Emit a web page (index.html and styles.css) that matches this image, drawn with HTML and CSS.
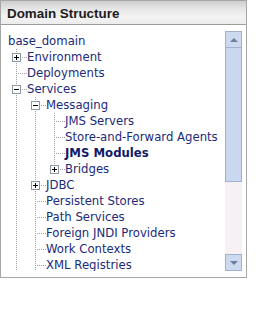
FILE: index.html
```html
<!DOCTYPE html>
<html>
<head>
<meta charset="utf-8">
<link rel="stylesheet" href="styles.css">
</head>
<body>
<div class="panel">
  <div class="header">Domain Structure</div>
  <div class="content">
    <div class="tree">
      <div class="row root"><span class="label">base_domain</span></div>
      <div class="row"><span class="c tee"><span class="box plus"></span></span><span class="label">Environment</span></div>
      <div class="row"><span class="c tee h"></span><span class="label">Deployments</span></div>
      <div class="row"><span class="c tee"><span class="box minus"></span></span><span class="label">Services</span></div>
      <div class="row"><span class="c v"></span><span class="c tee"><span class="box minus"></span></span><span class="label">Messaging</span></div>
      <div class="row"><span class="c v"></span><span class="c v"></span><span class="c tee h"></span><span class="label">JMS Servers</span></div>
      <div class="row"><span class="c v"></span><span class="c v"></span><span class="c tee h"></span><span class="label">Store-and-Forward Agents</span></div>
      <div class="row"><span class="c v"></span><span class="c v"></span><span class="c tee h"></span><span class="label bold">JMS Modules</span></div>
      <div class="row"><span class="c v"></span><span class="c v"></span><span class="c ell"><span class="box plus"></span></span><span class="label">Bridges</span></div>
      <div class="row"><span class="c v"></span><span class="c tee"><span class="box plus"></span></span><span class="label">JDBC</span></div>
      <div class="row"><span class="c v"></span><span class="c tee h"></span><span class="label">Persistent Stores</span></div>
      <div class="row"><span class="c v"></span><span class="c tee h"></span><span class="label">Path Services</span></div>
      <div class="row"><span class="c v"></span><span class="c tee h"></span><span class="label">Foreign JNDI Providers</span></div>
      <div class="row"><span class="c v"></span><span class="c tee h"></span><span class="label">Work Contexts</span></div>
      <div class="row"><span class="c v"></span><span class="c tee h"></span><span class="label">XML Registries</span></div>
    </div>
    <div class="scrollbar">
      <div class="sb-btn up"><span class="arrow-up"></span></div>
      <div class="sb-thumb"></div>
      <div class="sb-track"></div>
      <div class="sb-btn down"><span class="arrow-down"></span></div>
    </div>
  </div>
</div>
</body>
</html>
```

FILE: styles.css
```css
html, body {
  margin: 0;
  padding: 0;
  background: #ffffff;
}

body {
  font-family: "DejaVu Sans", Verdana, sans-serif;
}

.panel {
  width: 245px;
  border: 1px solid #a6a6a6;
  background: #ffffff;
}

.header {
  height: 24px;
  border-bottom: 1px solid #9c9c9c;
  background: linear-gradient(to bottom, #cdcdcd 0%, #e6e6e6 35%, #f3f3f3 70%, #ececec 100%);
  color: #1c1c1c;
  font-family: "Liberation Sans", Arial, sans-serif;
  font-weight: bold;
  font-size: 13.4px;
  line-height: 25px;
  padding-left: 6px;
  box-sizing: border-box;
  width: 100%;
}

.content {
  display: flex;
  padding: 6px 4px 6px 0;
  height: 240px;
}

.tree {
  width: 224px;
  overflow: hidden;
  padding-left: 7px;
  padding-top: 2px;
  box-sizing: border-box;
}

.row {
  height: 16px;
  display: flex;
  align-items: center;
  white-space: nowrap;
}

.label {
  font-size: 11.7px;
  line-height: 16px;
  color: #1b2a7a;
}

.label.bold {
  font-weight: bold;
  color: #101a68;
}

.c {
  width: 19px;
  height: 16px;
  flex: none;
  display: flex;
  align-items: center;
  padding-left: 4px;
  box-sizing: border-box;
  background-repeat: no-repeat;
}

/* vertical guide line */
.c.v {
  background-image: repeating-linear-gradient(to bottom, #a3a3a3 0 1px, transparent 1px 2px);
  background-size: 1px 16px;
  background-position: 8px 0;
}

/* tee: full vertical + horizontal */
.c.tee {
  background-image:
    repeating-linear-gradient(to bottom, #a3a3a3 0 1px, transparent 1px 2px),
    repeating-linear-gradient(to right, #a3a3a3 0 1px, transparent 1px 2px);
  background-size: 1px 16px, 11px 1px;
  background-position: 8px 0, 8px 8px;
}

/* ell: top half vertical + horizontal */
.c.ell {
  background-image:
    repeating-linear-gradient(to bottom, #a3a3a3 0 1px, transparent 1px 2px),
    repeating-linear-gradient(to right, #a3a3a3 0 1px, transparent 1px 2px);
  background-size: 1px 8px, 11px 1px;
  background-position: 8px 0, 8px 8px;
}

.box {
  width: 9px;
  height: 9px;
  box-sizing: border-box;
  border: 1px solid #8f9aa0;
  background-color: #ffffff;
  background-repeat: no-repeat;
  margin-top: 1px;
}

.box.plus {
  background-image:
    linear-gradient(#000, #000),
    linear-gradient(#000, #000);
  background-size: 5px 1px, 1px 5px;
  background-position: 1px 3px, 3px 1px;
}

.box.minus {
  background-image: linear-gradient(#000, #000);
  background-size: 5px 1px;
  background-position: 1px 3px;
}

.scrollbar {
  width: 17px;
  display: flex;
  flex-direction: column;
  flex: none;
}

.sb-btn {
  height: 17px;
  flex: none;
  box-sizing: border-box;
  border: 1px solid #9fb1cb;
  background: #cbdaee;
  display: flex;
  align-items: center;
  justify-content: center;
}

.arrow-up {
  width: 0;
  height: 0;
  border-left: 4px solid transparent;
  border-right: 4px solid transparent;
  border-bottom: 4px solid #6f7d9c;
}

.arrow-down {
  width: 0;
  height: 0;
  border-left: 4px solid transparent;
  border-right: 4px solid transparent;
  border-top: 4px solid #6f7d9c;
}

.sb-thumb {
  height: 134px;
  flex: none;
  box-sizing: border-box;
  border: 1px solid #9fb1cb;
  border-top: none;
  background: #c9d8ee;
}

.sb-track {
  flex: 1;
  background: #f7f0f4;
}
```
